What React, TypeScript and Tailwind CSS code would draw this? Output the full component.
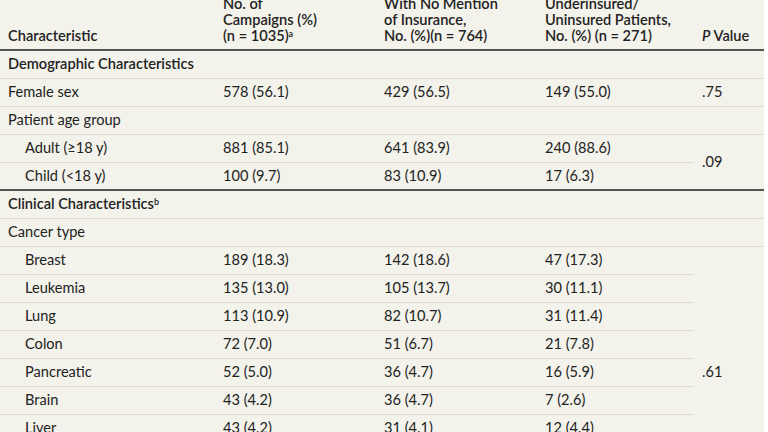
const rows: { label: string; a: string; b: string; c: string }[] = [
  { label: "Breast", a: "189 (18.3)", b: "142 (18.6)", c: "47 (17.3)" },
  { label: "Leukemia", a: "135 (13.0)", b: "105 (13.7)", c: "30 (11.1)" },
  { label: "Lung", a: "113 (10.9)", b: "82 (10.7)", c: "31 (11.4)" },
  { label: "Colon", a: "72 (7.0)", b: "51 (6.7)", c: "21 (7.8)" },
  { label: "Pancreatic", a: "52 (5.0)", b: "36 (4.7)", c: "16 (5.9)" },
  { label: "Brain", a: "43 (4.2)", b: "36 (4.7)", c: "7 (2.6)" },
  { label: "Liver", a: "43 (4.2)", b: "31 (4.1)", c: "12 (4.4)" },
  // continues below the fold
  { label: "", a: "", b: "", c: "" },
  { label: "", a: "", b: "", c: "" },
];

const td = "h-[28px] border-b border-[#dddbd2] px-2 align-middle";

export default function App() {
  return (
    <div className="h-[432px] w-[768px] overflow-hidden bg-white font-['Lato',sans-serif] text-[14.6px] text-[#222]">
      <div className="w-[764px] bg-[#f3f2eb]">
        <table className="w-full table-fixed border-collapse leading-[16px]">
          <colgroup>
            <col className="w-[215px]" />
            <col className="w-[161px]" />
            <col className="w-[161px]" />
            <col className="w-[157px]" />
            <col className="w-[70px]" />
          </colgroup>
          <thead>
            <tr className="h-[50px] border-b-2 border-[#555]">
              <th className="relative px-2 text-left font-semibold">
                <div className="absolute bottom-[5px] left-2">Characteristic</div>
              </th>
              <th className="relative px-2 text-left font-semibold">
                <div className="absolute bottom-[5px] left-2 whitespace-nowrap">
                  No. of
                  <br />
                  Campaigns (%)
                  <br />
                  (n = 1035)<sup className="text-[9px]">a</sup>
                </div>
              </th>
              <th className="relative px-2 text-left font-semibold">
                <div className="absolute bottom-[5px] left-2 whitespace-nowrap">
                  With No Mention
                  <br />
                  of Insurance,
                  <br />
                  No. (%)(n = 764)
                </div>
              </th>
              <th className="relative px-2 text-left font-semibold">
                <div className="absolute bottom-[5px] left-2 whitespace-nowrap">
                  Underinsured/
                  <br />
                  Uninsured Patients,
                  <br />
                  No. (%) (n = 271)
                </div>
              </th>
              <th className="relative px-2 text-left font-semibold">
                <div className="absolute bottom-[5px] left-2 whitespace-nowrap">
                  <i>P</i> Value
                </div>
              </th>
            </tr>
          </thead>
          <tbody>
            <tr>
              <td colSpan={5} className={`${td} font-semibold`}>
                Demographic Characteristics
              </td>
            </tr>
            <tr>
              <td className={td}>Female sex</td>
              <td className={td}>578 (56.1)</td>
              <td className={td}>429 (56.5)</td>
              <td className={td}>149 (55.0)</td>
              <td className={td}>.75</td>
            </tr>
            <tr>
              <td colSpan={5} className={td}>
                Patient age group
              </td>
            </tr>
            <tr>
              <td className={`${td} pl-[25px]`}>Adult (≥18 y)</td>
              <td className={td}>881 (85.1)</td>
              <td className={td}>641 (83.9)</td>
              <td className={td}>240 (88.6)</td>
              <td rowSpan={2} className="border-b-2 border-[#555] px-2 align-middle">
                .09
              </td>
            </tr>
            <tr className="border-b-2 border-[#555]">
              <td className="h-[28px] px-2 pl-[25px]">Child (&lt;18 y)</td>
              <td className="px-2">100 (9.7)</td>
              <td className="px-2">83 (10.9)</td>
              <td className="px-2">17 (6.3)</td>
            </tr>
            <tr>
              <td colSpan={5} className={`${td} font-semibold`}>
                Clinical Characteristics<sup className="text-[9px]">b</sup>
              </td>
            </tr>
            <tr>
              <td colSpan={5} className={td}>
                Cancer type
              </td>
            </tr>
            {rows.map((r, i) => (
              <tr key={i}>
                <td className={`${td} pl-[25px]`}>{r.label}</td>
                <td className={td}>{r.a}</td>
                <td className={td}>{r.b}</td>
                <td className={td}>{r.c}</td>
                {i === 0 ? (
                  <td rowSpan={rows.length} className="border-b border-[#dddbd2] px-2 align-middle">
                    .61
                  </td>
                ) : null}
              </tr>
            ))}
          </tbody>
        </table>
      </div>
    </div>
  );
}
